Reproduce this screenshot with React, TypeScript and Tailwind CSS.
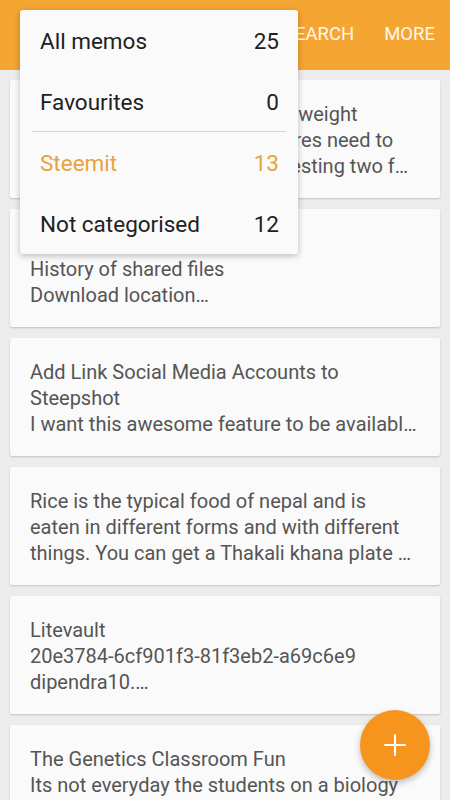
import { Plus } from 'lucide-react'

const notes = [
  ['Steemit apps should be a lightweight', 'and easy to use. All new features need to', 'be simple and way more interesting two f…'],
  ['Steepshot features list', 'History of shared files', 'Download location…'],
  ['Add Link Social Media Accounts to', 'Steepshot', 'I want this awesome feature to be availabl…'],
  ['Rice is the typical food of nepal and is', 'eaten in different forms and with different', 'things. You can get a Thakali khana plate …'],
  ['Litevault', '20e3784-6cf901f3-81f3eb2-a69c6e9', 'dipendra10.…'],
  ['The Genetics Classroom Fun', 'Its not everyday the students on a biology', 'class get to do something fun…'],
]

const menu = [
  { name: 'All memos', count: 25 },
  { name: 'Favourites', count: 0 },
  { name: 'Steemit', count: 13, active: true },
  { name: 'Not categorised', count: 12 },
]

export default function App() {
  return (
    <div
      className="relative h-[800px] w-[450px] overflow-hidden bg-[#ececec]"
      style={{ fontFamily: 'Roboto, "Noto Sans", sans-serif' }}
    >
      {/* toolbar */}
      <div className="flex h-[70px] items-center justify-end gap-[30px] bg-[#f5a532] pr-[15px] text-[18.5px] text-[#fff8ec]">
        <span>SEARCH</span>
        <span>MORE</span>
      </div>

      {/* memo list */}
      <div className="flex flex-col gap-[11px] px-[10px] pt-[10px]">
        {notes.map((lines, i) => (
          <div
            key={i}
            className="rounded-[2px] bg-[#fafafa] px-[20px] pt-[21px] pb-[19px] text-[20px] leading-[26px] text-[#555555] shadow-[0_1px_2px_rgba(0,0,0,0.18)]"
          >
            {lines.map((l, j) => (
              <div key={j} className="whitespace-nowrap overflow-hidden">
                {l}
              </div>
            ))}
          </div>
        ))}
      </div>

      {/* category popup */}
      <div className="absolute left-[20px] top-[10px] w-[278px] rounded-[3px] bg-[#fafafa] shadow-[0_2px_6px_rgba(0,0,0,0.25)]">
        {menu.map((m, i) => (
          <div key={m.name}>
            {i === 2 && <div className="mx-[12px] h-px bg-[#d6d6d6]" />}
            <div
              className={`flex items-center justify-between pl-[20px] pr-[19px] pt-[3px] text-[22.5px] ${
                m.active ? 'text-[#e9a23b]' : 'text-[#212121]'
              } ${i === 1 ? 'h-[60px]' : 'h-[61px]'}`}
            >
              <span>{m.name}</span>
              <span>{m.count}</span>
            </div>
          </div>
        ))}
      </div>

      {/* fab */}
      <button className="absolute left-[360px] top-[710px] flex h-[70px] w-[70px] items-center justify-center rounded-full bg-[#f7941d] text-white shadow-[0_3px_6px_rgba(0,0,0,0.25)]">
        <Plus size={34} strokeWidth={1.5} />
      </button>
    </div>
  )
}
